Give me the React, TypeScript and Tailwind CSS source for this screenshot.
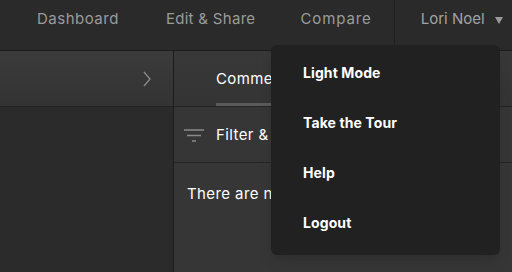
export default function App() {
  const font = { fontFamily: 'Inter, "Noto Sans", sans-serif' };
  return (
    <div className="relative w-[512px] h-[272px] overflow-hidden bg-[#2b2b2b] flex flex-col" style={font}>
      {/* Top nav */}
      <header className="h-[51px] shrink-0 flex items-center bg-[#2a2a2a] border-b border-[#1c1c1c] text-[15px] text-[#9b9b9b] tracking-[0.5px]">
        <span className="ml-[37px] pb-[11px]">Dashboard</span>
        <span className="ml-[47px] pb-[11px] tracking-[0.3px]">Edit &amp; Share</span>
        <span className="ml-[45px] pb-[11px] tracking-[0.9px]">Compare</span>
        <div className="ml-[22px] w-px h-full bg-[#1f1f1f]" />
        <span className="ml-[26px] pb-[11px] text-[#a3a3a3] tracking-[0px]">Lori Noel</span>
        <svg viewBox="0 0 8 7" className="ml-[10px] w-[8px] h-[7px] mb-[10px]">
          <path d="M0 0H8L4 7Z" fill="#9a9a9a" />
        </svg>
      </header>

      <div className="flex flex-1">
        {/* Left panel */}
        <div className="w-[173px] flex flex-col">
          <div className="h-[56px] flex items-center justify-end pr-[22px] bg-gradient-to-b from-[#3b3b3b] to-[#333333] border-b border-[#222]">
            <svg viewBox="0 0 8 16" className="w-[8px] h-[16px]">
              <path d="M1 1L7 8L1 15" stroke="#8a8a8a" strokeWidth="1.3" fill="none" />
            </svg>
          </div>
          <div className="flex-1 bg-[#2b2b2b]" />
        </div>
        <div className="w-px bg-[#1c1c1c]" />

        {/* Right panel */}
        <div className="flex-1 flex flex-col bg-[#363636]">
          <div className="h-[56px] flex flex-col bg-gradient-to-b from-[#383838] to-[#343434] border-b border-[#242424]">
            <div className="flex-1 flex items-center pl-[42px] pt-[5px] text-[15px] tracking-[0.4px] text-white">Comments</div>
            <div className="ml-[42px] w-[120px] h-[3px] bg-[#5a5a5a]" />
          </div>
          <div className="h-[56px] flex items-center pl-[10px] pt-[2px] border-b border-[#242424] text-[15px] tracking-[0.4px] text-white">
            <svg viewBox="0 0 20 14" className="w-[20px] h-[14px]">
              <path d="M0 1H20M3 6.5H17M8 12H12" stroke="#8a8a8a" strokeWidth="1.4" />
            </svg>
            <span className="ml-[12px]">Filter &amp; Sort</span>
          </div>
          <div className="pl-[13px] pt-[20px] text-[15px] tracking-[0.4px] text-white">There are no comments yet.</div>
        </div>
      </div>

      {/* Dropdown menu */}
      <div className="absolute left-[271px] top-[45px] w-[229px] h-[210px] rounded-[6px] bg-[#212121] pt-[2px] text-[14px] font-bold text-white shadow-lg">
        {['Light Mode', 'Take the Tour', 'Help', 'Logout'].map((item) => (
          <div key={item} className="h-[50px] flex items-center pl-[32px] tracking-[0.1px]">
            {item}
          </div>
        ))}
      </div>
    </div>
  );
}
